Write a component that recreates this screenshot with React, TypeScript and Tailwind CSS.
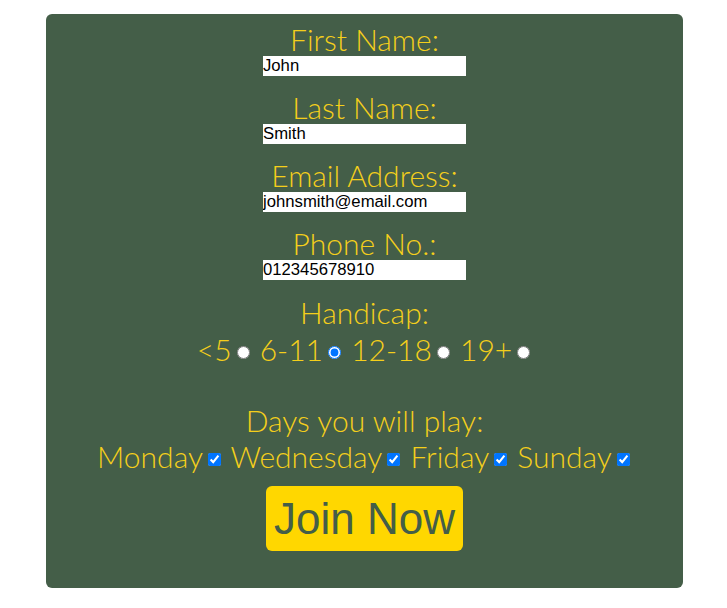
import React from 'react';

const labelCls = "block text-[30px] leading-[33px] font-light text-[#f5cf1b]";
const rowCls = "text-[30px] leading-[36px] font-light text-[#f5cf1b]";
const inputCls = "block mx-auto w-[203px] h-[20px] bg-white text-black text-[16.7px] leading-[20px] px-0 py-0 border-0 outline-none";
const arial = { fontFamily: '"Liberation Sans", Arial, sans-serif' };
const boxCls = "ml-[5px] mr-[2px] w-[13px] h-[13px] align-[2px]";

export default function App() {
  return (
    <div className="w-[727px] h-[608px] bg-white pt-[14px]" style={{ fontFamily: 'Lato, "Noto Sans", sans-serif' }}>
      <form className="ml-[46px] w-[637px] h-[574px] bg-[#445e48] rounded-md pt-[9px] text-center">
        <label className={labelCls}>First Name:</label>
        <input className={inputCls} style={arial} defaultValue="John" />

        <label className={`${labelCls} mt-[15px]`}>Last Name:</label>
        <input className={inputCls} style={arial} defaultValue="Smith" />

        <label className={`${labelCls} mt-[15px]`}>Email Address:</label>
        <input className={inputCls} style={arial} defaultValue="johnsmith@email.com" />

        <label className={`${labelCls} mt-[15px]`}>Phone No.:</label>
        <input className={inputCls} style={arial} defaultValue="012345678910" />

        <div className={`${labelCls} mt-[16px]`}>Handicap:</div>
        <div className={`${rowCls} mt-[2px]`}>
          &lt;5<input type="radio" name="hc" className={boxCls} />{' '}
          6-11<input type="radio" name="hc" defaultChecked className={boxCls} />{' '}
          12-18<input type="radio" name="hc" className={boxCls} />{' '}
          19+<input type="radio" name="hc" className={boxCls} />
        </div>

        <div className={`${labelCls} mt-[37px]`}>Days you will play:</div>
        <div className={`${rowCls} mt-[1px]`}>
          Monday<input type="checkbox" defaultChecked className={boxCls} />{' '}
          Wednesday<input type="checkbox" defaultChecked className={boxCls} />{' '}
          Friday<input type="checkbox" defaultChecked className={boxCls} />{' '}
          Sunday<input type="checkbox" defaultChecked className={boxCls} />
        </div>

        <button
          type="button"
          className="mt-[12px] w-[197px] h-[65px] bg-[#ffd700] text-[#445e48] text-[44px] leading-[65px] rounded-md"
          style={arial}
        >
          Join Now
        </button>
      </form>
    </div>
  );
}
